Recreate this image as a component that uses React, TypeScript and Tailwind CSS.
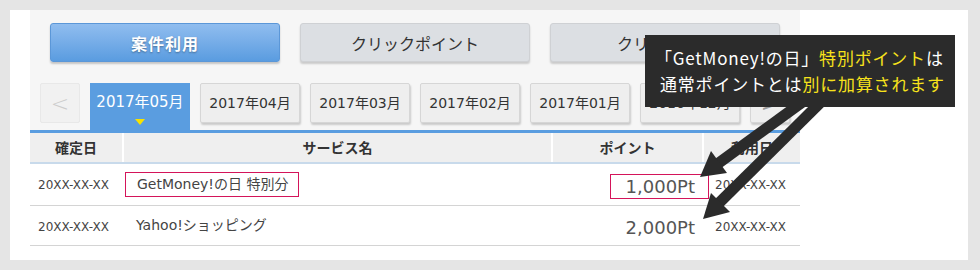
import React from "react";

const LAT = "font-[family-name:'DejaVu_Sans','Noto_Sans_CJK_JP',sans-serif]";
const JP = "font-[family-name:'Noto_Sans_CJK_JP',sans-serif]";

function Tab({ label }: { label: string }) {
  return (
    <div
      className={`w-[100px] h-[40px] flex items-center justify-center bg-[#eeeeee] border border-[#d6d6d6] rounded-[2px] shadow-[1px_2px_2px_rgba(0,0,0,0.18)] text-[14px] text-[#333] ${LAT}`}
    >
      {label}
    </div>
  );
}

export default function App() {
  return (
    <div className="relative w-[980px] h-[270px] bg-[#e5e5e5] p-[10px] overflow-hidden">
      <div className="w-[958px] h-[250px] bg-white pl-[20px]">
        <div className="w-[770px]">
          {/* panel */}
          <div className="bg-[#f6f6f6] pt-[13px]">
            <div className="flex gap-[20px] px-[20px]">
              <div
                className={`w-[230px] h-[39px] flex items-center justify-center rounded-[3px] border border-[#5b97d8] bg-gradient-to-b from-[#90bdef] to-[#5a9ce0] shadow-[0_2px_2px_rgba(0,0,0,0.2)] text-white font-bold text-[16px] tracking-[1px] [text-shadow:0_1px_2px_rgba(0,0,0,0.35)] ${JP}`}
              >
                案件利用
              </div>
              <div
                className={`w-[230px] h-[39px] flex items-center justify-center rounded-[3px] border border-[#cfd1d4] bg-[#dcdfe3] shadow-[0_2px_2px_rgba(0,0,0,0.18)] text-[#333] text-[16px] ${JP}`}
              >
                クリックポイント
              </div>
              <div
                className={`w-[230px] h-[39px] flex items-center justify-center rounded-[3px] border border-[#cfd1d4] bg-[#dcdfe3] shadow-[0_2px_2px_rgba(0,0,0,0.18)] text-[#333] text-[16px] ${JP}`}
              >
                クリック履歴
              </div>
            </div>
            <div className="flex items-start gap-[10px] px-[10px] mt-[21px] h-[47px]">
              <div className="w-[40px] h-[40px] flex items-center justify-center bg-[#f1f1f1] border border-[#e8e8e8] rounded-[2px] text-[#cccccc] text-[22px] font-light font-[family-name:'DejaVu_Sans',sans-serif]">
                &lt;
              </div>
              <div className="w-[100px] h-[47px] bg-[#5a9de0] flex flex-col items-center pt-[8px]">
                <span className={`text-white text-[15px] leading-[22px] ${LAT}`}>2017年05月</span>
                <span className="mt-[6px] w-0 h-0 border-l-[5px] border-r-[5px] border-t-[6px] border-l-transparent border-r-transparent border-t-[#f7e200]" />
              </div>
              <Tab label="2017年04月" />
              <Tab label="2017年03月" />
              <Tab label="2017年02月" />
              <Tab label="2017年01月" />
              <Tab label="2016年12月" />
              <div className="w-[40px] h-[40px] flex items-center justify-center bg-[#eeeeee] border border-[#d6d6d6] rounded-[2px] shadow-[1px_2px_2px_rgba(0,0,0,0.18)] text-[#999] text-[22px] font-[family-name:'DejaVu_Sans',sans-serif]">
                &gt;
              </div>
            </div>
          </div>
          <div className="h-[3px] bg-[#5a9de0]" />
          {/* table */}
          <div className={`${LAT}`}>
            <div className={`flex h-[31px] bg-[#efefef] border-b-2 border-[#c8daeb] text-[14px] font-bold text-[#333] ${JP}`}>
              <div className="w-[94px] flex items-center justify-center border-r-2 border-white">確定日</div>
              <div className="w-[429px] flex items-center justify-center border-r-2 border-white">サービス名</div>
              <div className="w-[151px] flex items-center justify-center border-r-2 border-white">ポイント</div>
              <div className="flex-1 flex items-center justify-center">利用日</div>
            </div>
            <div className="flex h-[42px] items-center border-b border-[#d4d4d4] text-[#444]">
              <div className="w-[94px] pl-[8px] text-[12px] pt-[1px]">20XX-XX-XX</div>
              <div className="w-[429px] pl-[1px]">
                <span className="inline-block border border-[#d4145a] pl-[11px] pr-[10px] h-[25px] leading-[23px] text-[14px]">
                  GetMoney!の日 特別分
                </span>
              </div>
              <div className="w-[151px] flex justify-end pr-[9px]">
                <span className="inline-block border border-[#d4145a] pl-[15px] pr-[13px] mr-[-14px] h-[25px] leading-[23px] mt-[4px] text-[18px] text-[#555]">
                  1,000Pt
                </span>
              </div>
              <div className="flex-1 pl-[11px] text-[12px] pt-[1px]">20XX-XX-XX</div>
            </div>
            <div className="flex h-[40px] items-center border-b border-[#d4d4d4] text-[#444]">
              <div className="w-[94px] pl-[8px] text-[12px] pt-[2px]">20XX-XX-XX</div>
              <div className="w-[429px] pl-[12px] text-[14px]">Yahoo!ショッピング</div>
              <div className="w-[151px] flex justify-end pr-[9px] text-[18px] text-[#555] pt-[3px]">2,000Pt</div>
              <div className="flex-1 pl-[11px] text-[12px] pt-[3px]">20XX-XX-XX</div>
            </div>
          </div>
        </div>
      </div>

      {/* arrows */}
      <svg className="absolute inset-0 pointer-events-none" width="980" height="270" viewBox="0 0 980 270">
        <line x1="808" y1="98" x2="716" y2="165" stroke="#2b2b2b" strokeWidth="11" />
        <polygon points="700,177 727,173 711,151" fill="#2b2b2b" />
        <line x1="825" y1="98" x2="718" y2="204" stroke="#2b2b2b" strokeWidth="11" />
        <polygon points="703,219 730,212 711,193" fill="#2b2b2b" />
      </svg>

      {/* tooltip */}
      <div
        className={`absolute left-[645px] top-[35px] w-[310px] h-[72px] bg-[#2b2b2b] pl-[10px] pt-[10px] text-white text-[17px] leading-[26px] tracking-[0.8px] font-normal ${JP}`}
      >
        <div>
          「GetMoney!の日」<span className="text-[#f7e21b]">特別ポイント</span>は
        </div>
        <div className="pl-[5px]">
          通常ポイントとは<span className="text-[#f7e21b]">別に加算されます</span>
        </div>
      </div>
    </div>
  );
}
